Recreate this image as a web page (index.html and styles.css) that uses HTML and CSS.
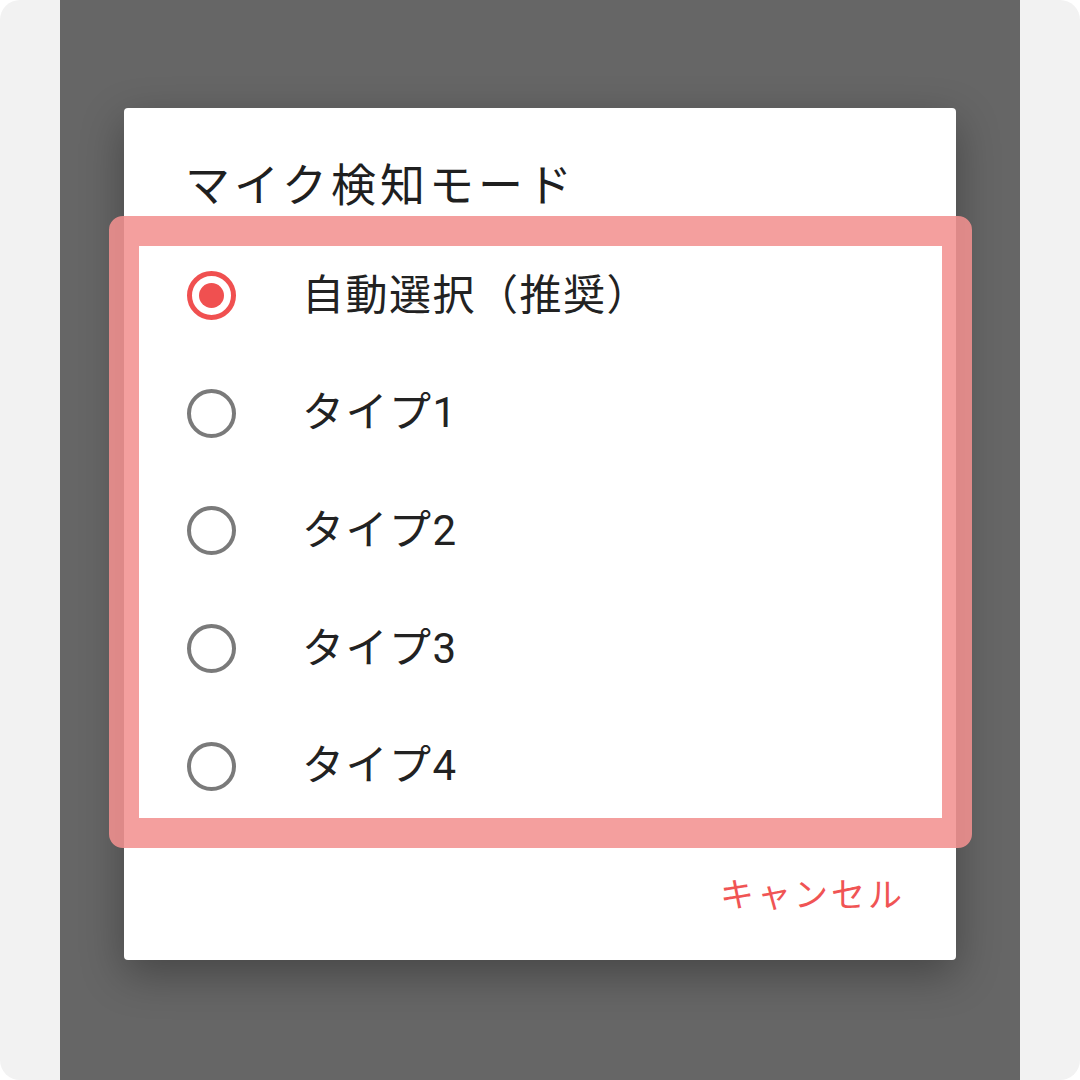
FILE: index.html
```html
<!DOCTYPE html>
<html lang="ja">
<head>
<meta charset="utf-8">
<title>マイク検知モード</title>
<link rel="stylesheet" href="styles.css">
</head>
<body>
<div class="frame">
  <div class="screen">
    <div class="dialog">
      <h1 class="title">マイク検知モード</h1>
      <ul class="options">
        <li class="option">
          <span class="radio radio-on"><span class="dot"></span></span>
          <span class="label">自動選択（推奨）</span>
        </li>
        <li class="option">
          <span class="radio"></span>
          <span class="label">タイプ1</span>
        </li>
        <li class="option">
          <span class="radio"></span>
          <span class="label">タイプ2</span>
        </li>
        <li class="option">
          <span class="radio"></span>
          <span class="label">タイプ3</span>
        </li>
        <li class="option">
          <span class="radio"></span>
          <span class="label">タイプ4</span>
        </li>
      </ul>
      <div class="actions">
        <span class="cancel">キャンセル</span>
      </div>
      <div class="highlight"></div>
    </div>
  </div>
</div>
</body>
</html>
```

FILE: styles.css
```css
* { box-sizing: border-box; }

html, body {
  margin: 0;
  padding: 0;
  background: #ffffff;
}

body {
  font-family: Roboto, "Noto Sans CJK JP", sans-serif;
}

.frame {
  width: 1080px;
  height: 1080px;
  background: #f2f2f2;
  border-radius: 20px;
  padding: 0 60px;
  overflow: hidden;
}

.screen {
  height: 1080px;
  background: #666666;
  padding: 108px 64px 0 64px;
}

.dialog {
  position: relative;
  width: 832px;
  height: 852px;
  background: #ffffff;
  border-radius: 4px;
  box-shadow: 0 14px 44px rgba(0, 0, 0, 0.32);
  display: flex;
  flex-direction: column;
}

.title {
  margin: 0;
  padding: 51px 0 22px 61px;
  height: 129px;
  font-size: 45px;
  line-height: 56px;
  font-weight: 400;
  letter-spacing: 4px;
  color: #1f1f1f;
}

.options {
  list-style: none;
  margin: 0;
  padding: 0;
  display: flex;
  flex-direction: column;
}

.option {
  height: 117.6px;
  display: flex;
  align-items: center;
  padding-left: 63px;
  gap: 66px;
}

.radio {
  width: 49px;
  height: 49px;
  border-radius: 50%;
  border: 4px solid #7a7a7a;
  display: flex;
  align-items: center;
  justify-content: center;
  flex: none;
}

.radio-on {
  border: 5px solid #f05050;
}

.dot {
  width: 25px;
  height: 25px;
  border-radius: 50%;
  background: #f05050;
}

.label {
  font-size: 42px;
  line-height: 56px;
  letter-spacing: 1.5px;
  color: #222222;
}

.actions {
  flex: 1;
  display: flex;
  align-items: center;
  justify-content: flex-end;
  padding: 6px 51px 0 0;
}

.cancel {
  font-size: 34px;
  line-height: 44px;
  letter-spacing: 3px;
  color: #f05454;
}

.highlight {
  position: absolute;
  left: -15px;
  top: 108px;
  width: 863px;
  height: 632px;
  border: 30px solid rgba(242, 145, 144, 0.87);
  border-radius: 14px;
  pointer-events: none;
}
```
